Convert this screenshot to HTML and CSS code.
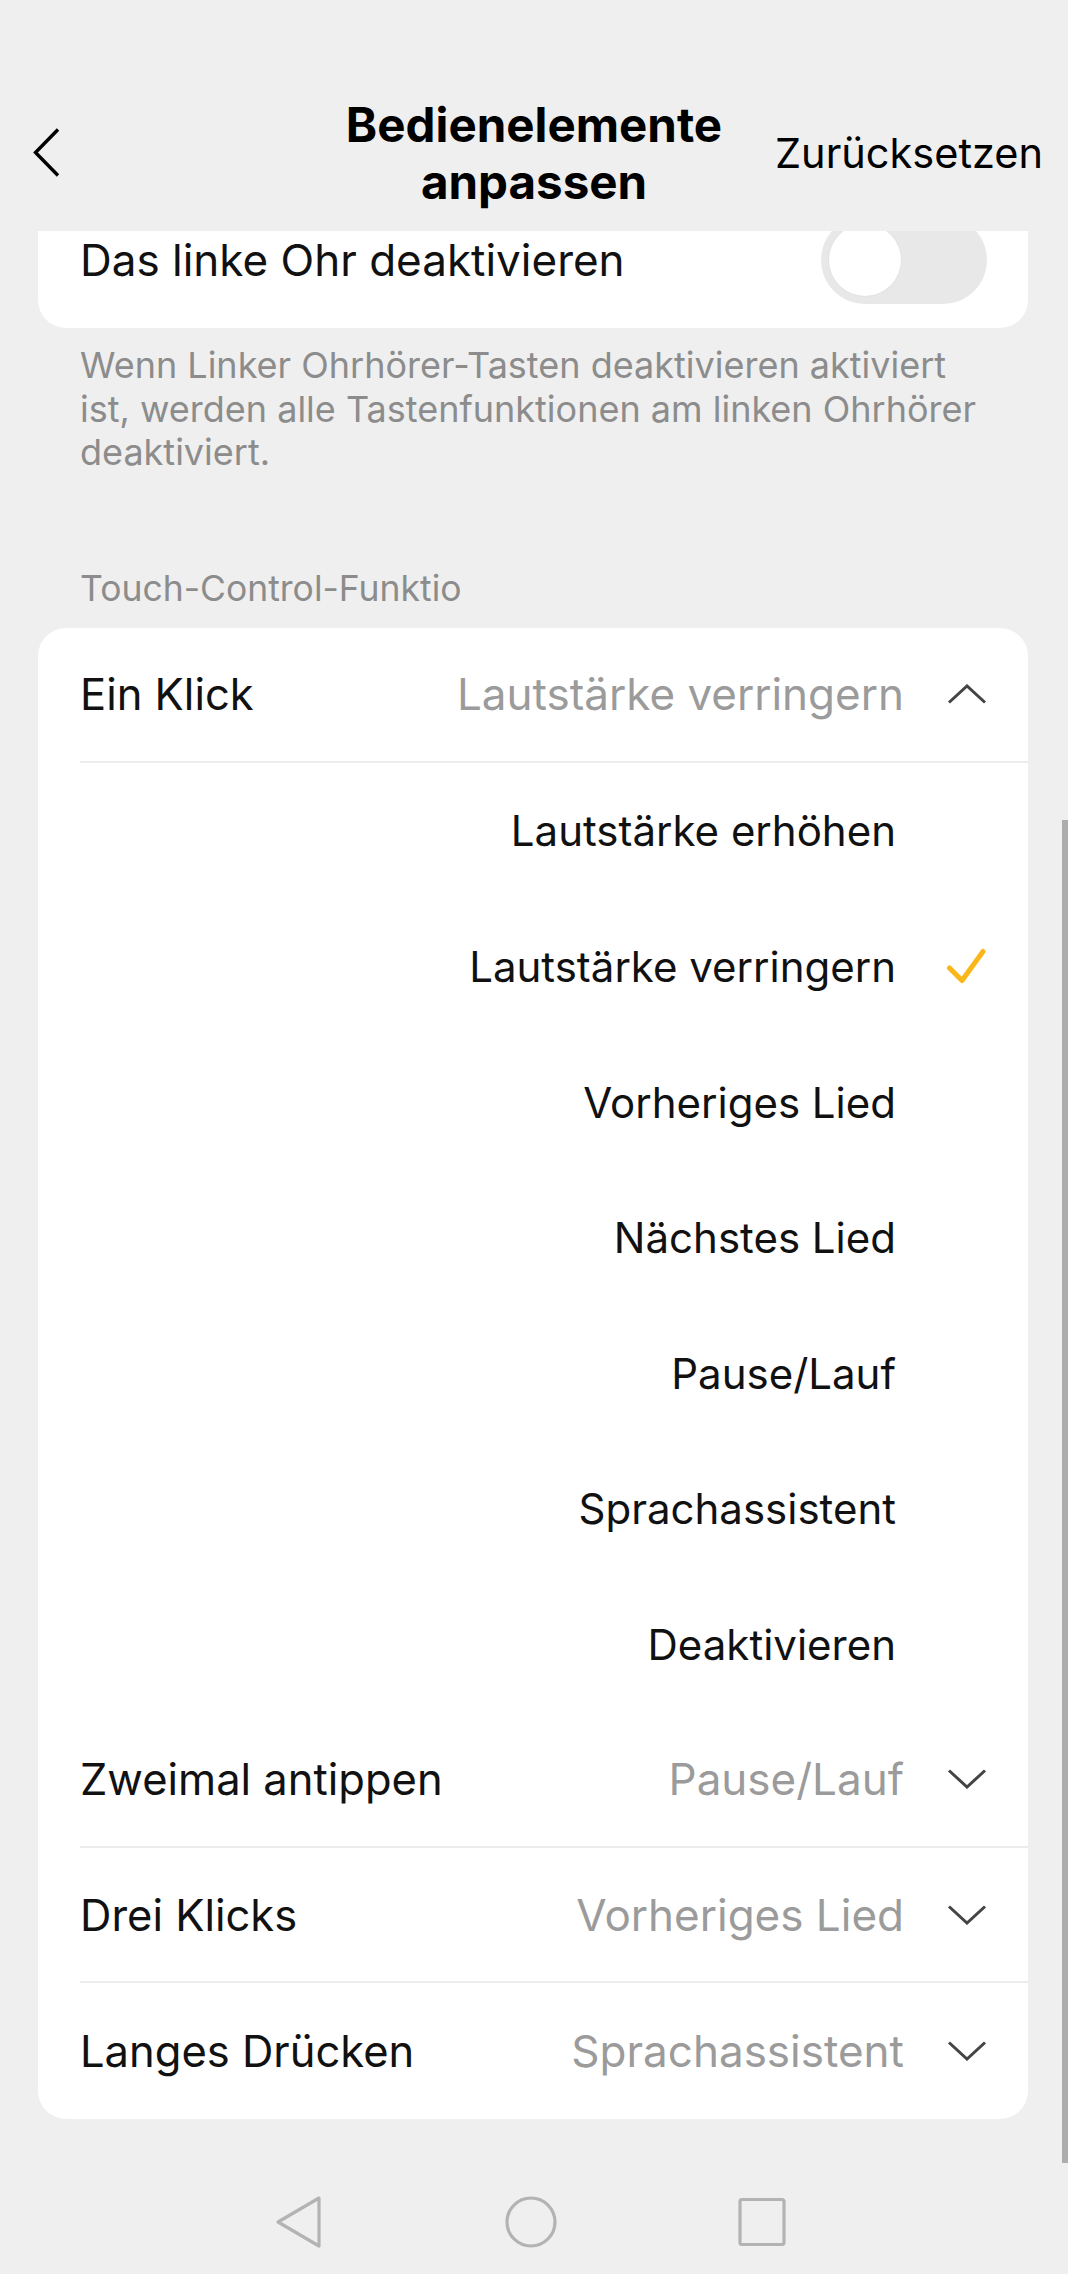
FILE: index.html
```html
<!DOCTYPE html>
<html lang="de">
<head>
<meta charset="utf-8">
<title>Bedienelemente anpassen</title>
<link rel="stylesheet" href="styles.css">
</head>
<body>
<header class="topbar">
  <div class="topbar-left">
    <svg class="back" width="27" height="49" viewBox="0 0 27 49"><path d="M25 1.5 L2.5 24.5 L25 47.5" fill="none" stroke="#000" stroke-width="3.4"/></svg>
  </div>
  <h1 class="title">Bedienelemente<br>anpassen</h1>
  <div class="topbar-right"><span class="reset">Zurücksetzen</span></div>
</header>

<main class="content">
  <section class="card card-first">
    <div class="switch-row">
      <span class="label">Das linke Ohr deaktivieren</span>
      <span class="toggle"><span class="knob"></span></span>
    </div>
  </section>
  <p class="hint">Wenn Linker Ohrhörer-Tasten deaktivieren aktiviert<br>ist, werden alle Tastenfunktionen am linken Ohrhörer<br>deaktiviert.</p>

  <h2 class="section-label">Touch-Control-Funktio</h2>
  <section class="card">
    <div class="row divider">
      <span class="label">Ein Klick</span>
      <span class="value">Lautstärke verringern</span>
      <svg class="chev" width="40" height="20" viewBox="0 0 40 20"><path d="M2 18.5 L20 2 L38 18.5" fill="none" stroke="#444" stroke-width="3"/></svg>
    </div>
    <div class="option"><span>Lautstärke erhöhen</span><span class="opt-icon"></span></div>
    <div class="option"><span>Lautstärke verringern</span><span class="opt-icon"><svg width="40" height="36" viewBox="0 0 40 36"><path d="M3.5 20 L16 32.5 L37 3.5" fill="none" stroke="#fbb61a" stroke-width="5" stroke-linecap="round" stroke-linejoin="round"/></svg></span></div>
    <div class="option"><span>Vorheriges Lied</span><span class="opt-icon"></span></div>
    <div class="option"><span>Nächstes Lied</span><span class="opt-icon"></span></div>
    <div class="option"><span>Pause/Lauf</span><span class="opt-icon"></span></div>
    <div class="option"><span>Sprachassistent</span><span class="opt-icon"></span></div>
    <div class="option"><span>Deaktivieren</span><span class="opt-icon"></span></div>
    <div class="row divider">
      <span class="label">Zweimal antippen</span>
      <span class="value">Pause/Lauf</span>
      <svg class="chev" width="40" height="20" viewBox="0 0 40 20"><path d="M2 1.5 L20 18 L38 1.5" fill="none" stroke="#444" stroke-width="3"/></svg>
    </div>
    <div class="row divider">
      <span class="label">Drei Klicks</span>
      <span class="value">Vorheriges Lied</span>
      <svg class="chev" width="40" height="20" viewBox="0 0 40 20"><path d="M2 1.5 L20 18 L38 1.5" fill="none" stroke="#444" stroke-width="3"/></svg>
    </div>
    <div class="row">
      <span class="label">Langes Drücken</span>
      <span class="value">Sprachassistent</span>
      <svg class="chev" width="40" height="20" viewBox="0 0 40 20"><path d="M2 1.5 L20 18 L38 1.5" fill="none" stroke="#444" stroke-width="3"/></svg>
    </div>
  </section>
</main>

<nav class="navbar">
  <svg width="60" height="54" viewBox="0 0 60 54"><path d="M49 3 L8 27 L49 51 Z" fill="none" stroke="#b3b3b3" stroke-width="3.2" stroke-linejoin="round"/></svg>
  <svg width="60" height="54" viewBox="0 0 60 54"><circle cx="30" cy="27" r="24" fill="none" stroke="#b3b3b3" stroke-width="3.2"/></svg>
  <svg width="60" height="54" viewBox="0 0 60 54"><rect x="8" y="4.5" width="44" height="45" rx="2" fill="none" stroke="#b3b3b3" stroke-width="3.2"/></svg>
</nav>

<div class="scrollbar"></div>
</body>
</html>
```

FILE: styles.css
```css
* { box-sizing: border-box; }

html, body {
  margin: 0;
  padding: 0;
}

body {
  width: 1068px;
  height: 2274px;
  overflow: hidden;
  background: #efefef;
  font-family: Inter, "Noto Sans", "Liberation Sans", sans-serif;
  color: #111;
  display: flex;
  flex-direction: column;
}

.topbar {
  position: relative;
  z-index: 2;
  flex: 0 0 231px;
  background: #efefef;
  padding-top: 74px;
  display: grid;
  grid-template-columns: 1fr auto 1fr;
  align-items: center;
}

.topbar-left {
  padding-left: 33px;
  display: flex;
  align-items: center;
}

.title {
  margin: 0;
  font-size: 47.5px;
  font-weight: 700;
  line-height: 57px;
  text-align: center;
  color: #000;
}

.topbar-right {
  display: flex;
  justify-content: flex-end;
  padding-right: 25px;
}

.reset {
  font-size: 41.5px;
  color: #000;
  white-space: nowrap;
}

.content {
  flex: 1 1 auto;
  overflow: hidden;
  display: flex;
  flex-direction: column;
}

.card {
  margin: 0 40px 0 38px;
  background: #fff;
  border-radius: 28px;
}

.card-first {
  margin-top: -39px;
}

.switch-row {
  height: 136px;
  padding: 0 41px 0 42px;
  display: flex;
  align-items: center;
  justify-content: space-between;
}

.switch-row .label {
  font-size: 44px;
}

.toggle {
  width: 166px;
  height: 88px;
  border-radius: 44px;
  background: #e8e8e8;
  padding: 0 8px;
  display: flex;
  align-items: center;
}

.knob {
  width: 72px;
  height: 72px;
  border-radius: 50%;
  background: #fff;
  box-shadow: 0 0 2px rgba(0,0,0,0.08);
}

.label {
  font-size: 43.5px;
  color: #111;
  white-space: nowrap;
}

.hint {
  margin: 16px 30px 0 80px;
  font-size: 36px;
  line-height: 43.5px;
  color: #8c8c8c;
  white-space: nowrap;
}

.section-label {
  margin: 94px 0 19px 80px;
  font-size: 35.5px;
  line-height: 40px;
  font-weight: 400;
  color: #8c8c8c;
}

.row {
  height: 135.6px;
  margin-left: 42px;
  padding-right: 41px;
  display: flex;
  align-items: center;
}

.row .label {
  flex: 1 1 auto;
}

.row .value {
  font-size: 44px;
  color: #9b9b9b;
  white-space: nowrap;
  margin-right: 43px;
}

.chev {
  flex: 0 0 40px;
}

.divider {
  border-bottom: 2px solid #ececec;
}

.option {
  height: 135.6px;
  padding-right: 42px;
  display: flex;
  align-items: center;
  justify-content: flex-end;
  font-size: 42px;
  color: #111;
}

.opt-icon {
  width: 40px;
  height: 36px;
  margin-left: 50px;
  display: flex;
}

.navbar {
  flex: 0 0 104px;
  display: flex;
  justify-content: center;
  align-items: center;
  gap: 171px;
  padding-right: 6px;
}

.scrollbar {
  position: absolute;
  right: 0;
  top: 820px;
  width: 6px;
  height: 1343px;
  background: #adadad;
}
```
